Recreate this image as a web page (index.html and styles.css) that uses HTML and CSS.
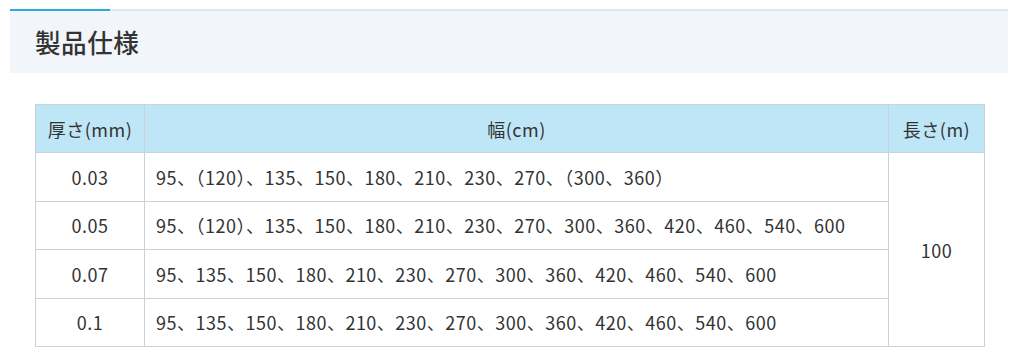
FILE: index.html
```html
<!DOCTYPE html>
<html lang="ja">
<head>
<meta charset="utf-8">
<link rel="stylesheet" href="styles.css">
</head>
<body>
<div class="page">
  <h2 class="heading">製品仕様</h2>
  <div class="table-wrap">
    <table class="spec">
      <thead>
        <tr>
          <th class="c1">厚さ(mm)</th>
          <th class="c2">幅(cm)</th>
          <th class="c3">長さ(m)</th>
        </tr>
      </thead>
      <tbody>
        <tr>
          <td class="c1">0.03</td>
          <td class="c2 left">95、（120）、135、150、180、210、230、270、（300、360）</td>
          <td class="c3" rowspan="4">100</td>
        </tr>
        <tr>
          <td class="c1">0.05</td>
          <td class="c2 left">95、（120）、135、150、180、210、230、270、300、360、420、460、540、600</td>
        </tr>
        <tr>
          <td class="c1">0.07</td>
          <td class="c2 left">95、135、150、180、210、230、270、300、360、420、460、540、600</td>
        </tr>
        <tr>
          <td class="c1">0.1</td>
          <td class="c2 left">95、135、150、180、210、230、270、300、360、420、460、540、600</td>
        </tr>
      </tbody>
    </table>
  </div>
</div>
</body>
</html>
```
FILE: styles.css
```css
html, body {
  margin: 0;
  padding: 0;
  background: #fff;
}
body {
  font-family: "Noto Sans CJK JP", "Noto Sans", sans-serif;
  color: #333;
}
.page {
  padding: 9px 10px 0 10px;
}
.heading {
  margin: 0;
  height: 64px;
  box-sizing: border-box;
  border-top: 2px solid #e4e8ed;
  background: #f2f6fa;
  position: relative;
  padding: 0 0 0 25px;
  font-size: 25.6px;
  font-weight: 500;
  letter-spacing: 0.5px;
  line-height: 62px;
  color: #333;
}
.heading::before {
  content: "";
  position: absolute;
  left: 0;
  top: -2px;
  width: 100px;
  height: 2px;
  background: #29abe2;
}
.table-wrap {
  padding: 31px 23px 0 25px;
}
.spec {
  width: 950px;
  border-collapse: collapse;
  font-size: 18px;
  letter-spacing: 0.5px;
}
.spec th, .spec td {
  border: 1px solid #c8d3dc;
  text-align: center;
  font-weight: 400;
  padding: 0 11px;
  box-sizing: border-box;
}
.spec th {
  background: #bfe6f7;
  height: 48px;
}
.spec td {
  height: 48.5px;
}
.spec .c1 { width: 109px; }
.spec .c3 { width: 96px; }
.spec td.left { text-align: left; }
```
